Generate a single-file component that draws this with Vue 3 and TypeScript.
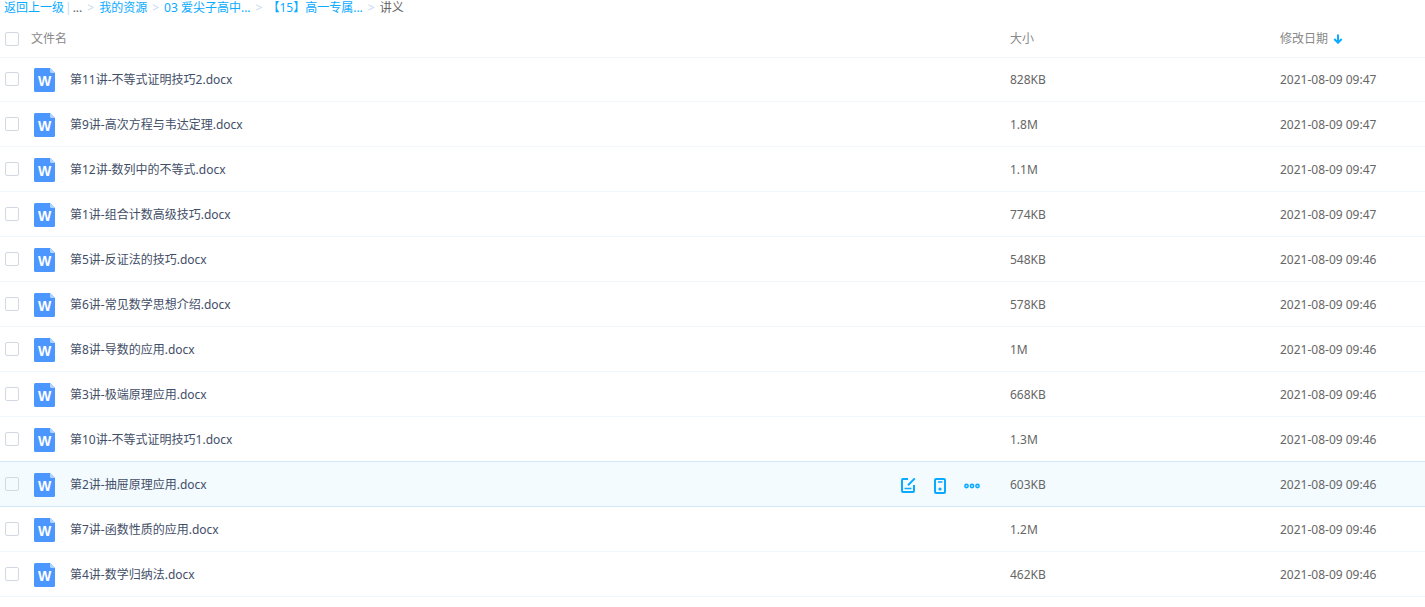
<script setup lang="ts">
import { computed, ref } from 'vue'

interface FileRow {
  name: string
  size: string
  date: string
}

const files: FileRow[] = [
  { name: '第11讲-不等式证明技巧2.docx', size: '828KB', date: '2021-08-09 09:47' },
  { name: '第9讲-高次方程与韦达定理.docx', size: '1.8M', date: '2021-08-09 09:47' },
  { name: '第12讲-数列中的不等式.docx', size: '1.1M', date: '2021-08-09 09:47' },
  { name: '第1讲-组合计数高级技巧.docx', size: '774KB', date: '2021-08-09 09:47' },
  { name: '第5讲-反证法的技巧.docx', size: '548KB', date: '2021-08-09 09:46' },
  { name: '第6讲-常见数学思想介绍.docx', size: '578KB', date: '2021-08-09 09:46' },
  { name: '第8讲-导数的应用.docx', size: '1M', date: '2021-08-09 09:46' },
  { name: '第3讲-极端原理应用.docx', size: '668KB', date: '2021-08-09 09:46' },
  { name: '第10讲-不等式证明技巧1.docx', size: '1.3M', date: '2021-08-09 09:46' },
  { name: '第2讲-抽屉原理应用.docx', size: '603KB', date: '2021-08-09 09:46' },
  { name: '第7讲-函数性质的应用.docx', size: '1.2M', date: '2021-08-09 09:46' },
  { name: '第4讲-数学归纳法.docx', size: '462KB', date: '2021-08-09 09:46' },
]

const active = ref(9)
const selected = ref<string[]>([])
const allSelected = computed({
  get: () => selected.value.length === files.length,
  set: (on: boolean) => {
    selected.value = on ? files.map((f) => f.name) : []
  },
})
</script>

<template>
  <main class="page">
    <nav class="crumbs" aria-label="路径">
      <a href="#">返回上一级</a>
      <span class="bar">|</span>
      <span class="more">...</span>
      <span class="sep">&gt;</span>
      <a href="#">我的资源</a>
      <span class="sep">&gt;</span>
      <a href="#">03 爱尖子高中...</a>
      <span class="sep">&gt;</span>
      <a href="#">【15】高一专属...</a>
      <span class="sep">&gt;</span>
      <span class="current">讲义</span>
    </nav>

    <table class="files">
      <colgroup>
        <col class="c-check" />
        <col />
        <col class="c-size" />
        <col class="c-date" />
      </colgroup>
      <thead>
        <tr>
          <th class="check"><input v-model="allSelected" type="checkbox" aria-label="全选" /></th>
          <th scope="col">文件名</th>
          <th scope="col">大小</th>
          <th scope="col">
            <button type="button" class="sort">
              修改日期
              <svg width="10" height="10" viewBox="0 0 10 10" aria-hidden="true">
                <path d="M5 0.5V8.5M1.3 5L5 8.7L8.7 5" fill="none" stroke="#09aaff" stroke-width="2" />
              </svg>
            </button>
          </th>
        </tr>
      </thead>
      <tbody>
        <tr v-for="(file, i) in files" :key="file.name" :class="{ active: i === active, before: i === active - 1 }">
          <td class="check">
            <input v-model="selected" type="checkbox" :value="file.name" :aria-label="file.name" />
          </td>
          <td>
            <div class="name">
              <svg class="doc" width="22" height="24" viewBox="0 0 22 24" aria-hidden="true">
                <path d="M1.5 0H16L21 5V22.5Q21 24 19.5 24H1.5Q0 24 0 22.5V1.5Q0 0 1.5 0Z" fill="#4b96ff" />
                <path d="M16 0L21 5H17.5Q16 5 16 3.5Z" fill="#b4d3ff" />
                <text class="letter" x="10.5" y="18" text-anchor="middle">W</text>
              </svg>
              <a href="#" class="title">{{ file.name }}</a>
              <div v-if="i === active" class="actions">
                <button type="button" aria-label="编辑">
                  <svg width="16" height="18" viewBox="0 0 16 18" aria-hidden="true">
                    <g fill="none" stroke="#09aaff" stroke-width="2">
                      <path d="M8 3H3Q2 3 2 4V15Q2 16 3 16H13Q14 16 14 15V9" />
                      <path d="M14.8 2.4L8 9.2" />
                      <path d="M4.5 12.5H11.5" stroke-width="1.5" />
                    </g>
                  </svg>
                </button>
                <button type="button" aria-label="发送到手机">
                  <svg width="16" height="18" viewBox="0 0 16 18" aria-hidden="true">
                    <rect x="3" y="3" width="10" height="14" rx="1" fill="none" stroke="#09aaff" stroke-width="2" />
                    <path d="M6 6H10.5" stroke="#09aaff" stroke-width="1.5" />
                    <circle cx="8" cy="13" r="1.6" fill="#09aaff" />
                  </svg>
                </button>
                <button type="button" aria-label="更多">
                  <svg width="16" height="18" viewBox="0 0 16 18" aria-hidden="true">
                    <g fill="#a5deff" stroke="#09aaff" stroke-width="1.4">
                      <circle cx="2.5" cy="10" r="1.7" />
                      <circle cx="8" cy="10" r="1.7" />
                      <circle cx="13.5" cy="10" r="1.7" />
                    </g>
                  </svg>
                </button>
              </div>
            </div>
          </td>
          <td>{{ file.size }}</td>
          <td>{{ file.date }}</td>
        </tr>
      </tbody>
    </table>
  </main>
</template>

<style>
body {
  background: #fff;
}
</style>

<style scoped>
.page {
  font: 12px/16px 'Noto Sans', 'Noto Sans CJK SC', sans-serif;
  color: #666;
}

a {
  color: #09aaff;
  text-decoration: none;
}

.crumbs {
  display: flex;
  height: 20px;
  padding-left: 4px;
  white-space: nowrap;
}

.bar {
  margin: 0 1px;
  color: #c4d8f4;
}

.sep {
  margin: 0 5px;
  color: #c4d8f4;
}

.files {
  width: 100%;
  table-layout: fixed;
  border-collapse: separate;
  border-spacing: 0;
}

.c-check {
  width: 31px;
}

.c-size {
  width: 270px;
}

.c-date {
  width: 145px;
}

th {
  height: 37px;
  padding: 0;
  font-weight: 400;
  text-align: left;
  color: #888;
}

td {
  box-sizing: border-box;
  height: 45px;
  padding: 2px 0 0;
  border-bottom: 1px solid #f2f6fd;
}

tbody tr:first-child td {
  box-shadow: inset 0 1px #f2f6fd;
}

.active td {
  background: #f3fbff;
}

.active td,
.before td {
  border-bottom-color: #d5e6fa;
}

.check {
  padding: 0 0 0 5px;
}

input {
  display: block;
  box-sizing: border-box;
  width: 14px;
  height: 14px;
  margin: 0;
  appearance: none;
  background: #fff;
  border: 1px solid #d3d9e3;
  border-radius: 2px;
}

.active input {
  background: transparent;
}

input:checked {
  background: #09aaff;
}

button {
  display: flex;
  align-items: center;
  padding: 0;
  border: 0;
  background: none;
  font: inherit;
  color: inherit;
  cursor: pointer;
}

.sort {
  gap: 5px;
}

.name {
  display: flex;
  align-items: center;
  padding-left: 3px;
}

.doc {
  flex: none;
}

.letter {
  font: 700 14px 'Liberation Sans', sans-serif;
  fill: #fff;
}

.title {
  margin-left: 14px;
  color: #424e67;
}

.actions {
  display: flex;
  gap: 16px;
  margin-left: auto;
  padding-right: 30px;
}
</style>
